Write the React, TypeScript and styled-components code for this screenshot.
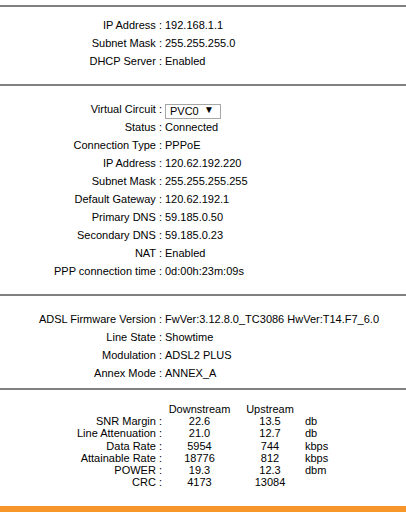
import React from "react";
import styled, { createGlobalStyle } from "styled-components";

const GlobalStyle = createGlobalStyle`
  html, body {
    margin: 0;
    padding: 0;
    background: #fff;
  }
  body {
    font-family: "Liberation Sans", Arial, sans-serif;
    font-size: 11px;
    color: #000;
  }
`;

const Page = styled.div`
  width: 406px;
  height: 512px;
  overflow: hidden;
  padding-top: 5px;
  box-sizing: border-box;
`;

const Rule = styled.div<{ $color?: string; $height?: number }>`
  height: ${(p) => p.$height ?? 2}px;
  background: ${(p) => p.$color ?? "#808080"};
`;

const Section = styled.div<{ $top: number; $bottom: number }>`
  padding-top: ${(p) => p.$top}px;
  padding-bottom: ${(p) => p.$bottom}px;
`;

const InfoGrid = styled.div`
  display: grid;
  grid-template-columns: 162px 1fr;
  grid-auto-rows: 18px;
  line-height: 18px;
  white-space: nowrap;
`;

const Label = styled.div`
  text-align: right;
`;

const Value = styled.div`
  padding-left: 3px;
  display: flex;
  align-items: center;
`;

const SelectWrap = styled.div`
  position: relative;
  width: 56px;
  height: 15px;
`;

const Select = styled.select`
  appearance: none;
  -webkit-appearance: none;
  width: 56px;
  height: 15px;
  margin: 0;
  padding: 0 0 0 4px;
  border: 1px solid #a6a6a6;
  border-radius: 0;
  background: #fff;
  font-family: "Liberation Sans", Arial, sans-serif;
  font-size: 11px;
  line-height: 13px;
  color: #000;
  box-sizing: border-box;
`;

const Arrow = styled.span`
  position: absolute;
  right: 7px;
  top: 0;
  font-size: 10px;
  line-height: 15px;
  pointer-events: none;
`;

const StatsGrid = styled.div`
  display: grid;
  grid-template-columns: 162px 75px 66px 1fr;
  grid-auto-rows: 12.2px;
  line-height: 12.2px;
  white-space: nowrap;
`;

const HeadCell = styled.div`
  text-align: center;
  height: 15.5px;
`;

const Num = styled.div`
  text-align: center;
`;

const Unit = styled.div`
  padding-left: 2px;
`;

type Row = [string, React.ReactNode];

const lan: Row[] = [
  ["IP Address", "192.168.1.1"],
  ["Subnet Mask", "255.255.255.0"],
  ["DHCP Server", "Enabled"],
];

const wan: Row[] = [
  ["Status", "Connected"],
  ["Connection Type", "PPPoE"],
  ["IP Address", "120.62.192.220"],
  ["Subnet Mask", "255.255.255.255"],
  ["Default Gateway", "120.62.192.1"],
  ["Primary DNS", "59.185.0.50"],
  ["Secondary DNS", "59.185.0.23"],
  ["NAT", "Enabled"],
  ["PPP connection time", "0d:00h:23m:09s"],
];

const adsl: Row[] = [
  ["ADSL Firmware Version", "FwVer:3.12.8.0_TC3086 HwVer:T14.F7_6.0"],
  ["Line State", "Showtime"],
  ["Modulation", "ADSL2 PLUS"],
  ["Annex Mode", "ANNEX_A"],
];

const stats: [string, string, string, string][] = [
  ["SNR Margin", "22.6", "13.5", "db"],
  ["Line Attenuation", "21.0", "12.7", "db"],
  ["Data Rate", "5954", "744", "kbps"],
  ["Attainable Rate", "18776", "812", "kbps"],
  ["POWER", "19.3", "12.3", "dbm"],
  ["CRC", "4173", "13084", ""],
];

const InfoRows = ({ rows }: { rows: Row[] }) => (
  <>
    {rows.map(([k, v]) => (
      <React.Fragment key={k}>
        <Label>{k} :</Label>
        <Value>{v}</Value>
      </React.Fragment>
    ))}
  </>
);

export default function App() {
  return (
    <Page>
      <GlobalStyle />
      <Rule />
      <Section $top={9} $bottom={14}>
        <InfoGrid>
          <InfoRows rows={lan} />
        </InfoGrid>
      </Section>
      <Rule />
      <Section $top={14} $bottom={14}>
        <InfoGrid>
          <Label>Virtual Circuit :</Label>
          <Value>
            <SelectWrap>
              <Select defaultValue="PVC0">
                <option>PVC0</option>
                <option>PVC1</option>
                <option>PVC2</option>
              </Select>
              <Arrow>▼</Arrow>
            </SelectWrap>
          </Value>
          <InfoRows rows={wan} />
        </InfoGrid>
      </Section>
      <Rule />
      <Section $top={14} $bottom={6}>
        <InfoGrid>
          <InfoRows rows={adsl} />
        </InfoGrid>
      </Section>
      <Rule />
      <Section $top={13} $bottom={18}>
        <StatsGrid>
          <HeadCell />
          <HeadCell>Downstream</HeadCell>
          <HeadCell>Upstream</HeadCell>
          <HeadCell />
          {stats.map(([k, d, u, unit]) => (
            <React.Fragment key={k}>
              <Label>{k} :</Label>
              <Num>{d}</Num>
              <Num>{u}</Num>
              <Unit>{unit}</Unit>
            </React.Fragment>
          ))}
        </StatsGrid>
      </Section>
      <Rule $color="#f7962a" $height={6} />
    </Page>
  );
}
